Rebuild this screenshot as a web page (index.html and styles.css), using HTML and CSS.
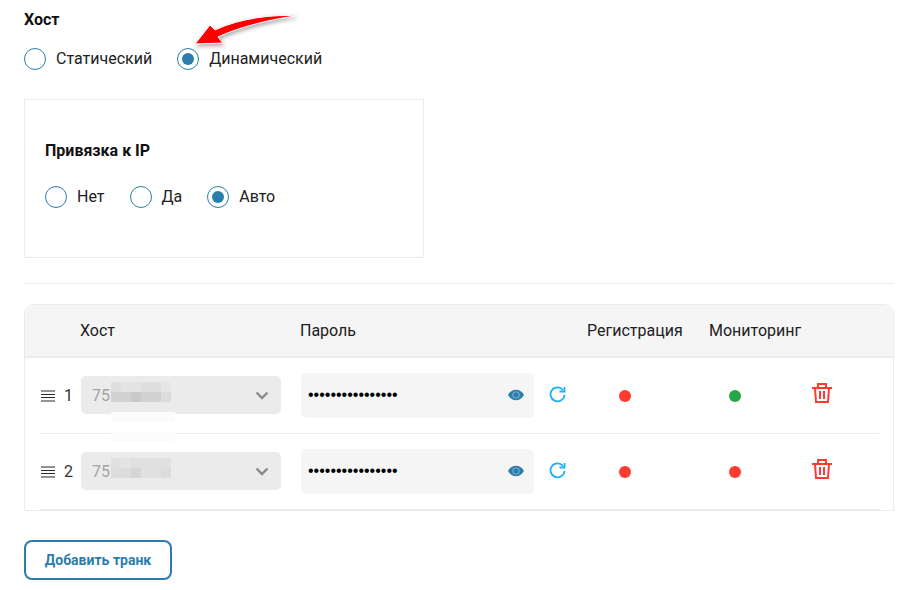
FILE: index.html
```html
<!DOCTYPE html>
<html lang="ru">
<head>
<meta charset="utf-8">
<title>Транки</title>
<link rel="stylesheet" href="styles.css">
</head>
<body>
<main class="page">
  <h2 class="title">Хост</h2>
  <div class="radios">
    <label class="radio"><span class="mark"></span>Статический</label>
    <label class="radio"><span class="mark on"></span>Динамический</label>
  </div>

  <section class="card">
    <h2 class="title">Привязка к IP</h2>
    <div class="radios">
      <label class="radio"><span class="mark"></span>Нет</label>
      <label class="radio"><span class="mark"></span>Да</label>
      <label class="radio"><span class="mark on"></span>Авто</label>
    </div>
  </section>

  <hr class="rule">

  <section class="table">
    <div class="head">
      <span class="h-host">Хост</span>
      <span class="h-pass">Пароль</span>
      <span class="h-reg">Регистрация</span>
      <span class="h-mon">Мониторинг</span>
    </div>

    <div class="row">
      <svg class="drag" width="16" height="12" viewBox="0 0 16 12"><path d="M1 1h14M1 4.500h14M1 7.500h14M1 11h14" stroke="#2a2a2a" stroke-width="1.200" fill="none"/></svg>
      <span class="num">1</span>
      <div class="select">
        <span class="sel-text">75</span>
        <svg class="mosaic" width="60" height="20" viewBox="0 0 60 20" shape-rendering="crispEdges"><rect width="60" height="10" fill="#dfdfdf"/><rect y="10" width="60" height="10" fill="#d2d2d2"/><rect x="10" width="20" height="10" fill="#e3e3e3"/><rect x="50" width="10" height="10" fill="#e6e6e6"/><rect x="20" y="10" width="10" height="10" fill="#c9c9c9"/><rect x="50" y="10" width="10" height="10" fill="#dcdcdc"/></svg>
        <svg class="chev" width="14" height="9" viewBox="0 0 14 9"><path d="M1.500 1.500 7 7l5.500-5.500" stroke="#8a8a8a" stroke-width="2.400" fill="none"/></svg>
      </div>
      <div class="pass">
        <span class="dots">••••••••••••••••</span>
        <svg class="eye" width="16" height="12" viewBox="0 0 16 12"><path d="M0 6C2 2.300 5 .8 8 .8s6 1.500 8 5.200c-2 3.700-5 5.200-8 5.200S2 9.700 0 6z" fill="#2b7dab"/><circle cx="8" cy="6" r="3.600" fill="#8dbbd5"/><circle cx="8" cy="6" r="2.700" fill="#2b7dab"/></svg>
      </div>
      <svg class="refresh" width="17" height="17" viewBox="0 0 17 17"><path d="M14 4A7 7 0 1 0 15.500 9" stroke="#1cb0f6" stroke-width="1.800" fill="none"/><path d="M15.500 1v4.500h-5" stroke="#1cb0f6" stroke-width="1.800" fill="none"/></svg>
      <span class="dot red c-reg"></span>
      <span class="dot green c-mon"></span>
      <svg class="trash" width="20" height="20" viewBox="0 0 20 20"><g stroke="#ff3b30" stroke-width="2" fill="none"><path d="M0 5h20M3 5l1 14h12l1-14M6 5V1h8v4M8 8v8M12 8v8"/></g></svg>
    </div>

    <div class="row">
      <svg class="drag" width="16" height="12" viewBox="0 0 16 12"><path d="M1 1h14M1 4.500h14M1 7.500h14M1 11h14" stroke="#2a2a2a" stroke-width="1.200" fill="none"/></svg>
      <span class="num">2</span>
      <div class="select">
        <span class="sel-text">75</span>
        <svg class="mosaic" width="60" height="20" viewBox="0 0 60 20" shape-rendering="crispEdges"><rect width="60" height="10" fill="#e0e0e0"/><rect y="10" width="60" height="10" fill="#dcdcdc"/><rect x="10" width="10" height="10" fill="#e4e4e4"/><rect x="20" y="10" width="10" height="10" fill="#d6d6d6"/><rect x="30" y="10" width="20" height="10" fill="#e0e0e0"/></svg>
        <svg class="chev" width="14" height="9" viewBox="0 0 14 9"><path d="M1.500 1.500 7 7l5.500-5.500" stroke="#8a8a8a" stroke-width="2.400" fill="none"/></svg>
      </div>
      <div class="pass">
        <span class="dots">••••••••••••••••</span>
        <svg class="eye" width="16" height="12" viewBox="0 0 16 12"><path d="M0 6C2 2.300 5 .8 8 .8s6 1.500 8 5.200c-2 3.700-5 5.200-8 5.200S2 9.700 0 6z" fill="#2b7dab"/><circle cx="8" cy="6" r="3.600" fill="#8dbbd5"/><circle cx="8" cy="6" r="2.700" fill="#2b7dab"/></svg>
      </div>
      <svg class="refresh" width="17" height="17" viewBox="0 0 17 17"><path d="M14 4A7 7 0 1 0 15.500 9" stroke="#1cb0f6" stroke-width="1.800" fill="none"/><path d="M15.500 1v4.500h-5" stroke="#1cb0f6" stroke-width="1.800" fill="none"/></svg>
      <span class="dot red c-reg"></span>
      <span class="dot red c-mon"></span>
      <svg class="trash" width="20" height="20" viewBox="0 0 20 20"><g stroke="#ff3b30" stroke-width="2" fill="none"><path d="M0 5h20M3 5l1 14h12l1-14M6 5V1h8v4M8 8v8M12 8v8"/></g></svg>
    </div>
    <div class="patch"></div>
  </section>

  <button class="add" type="button">Добавить транк</button>

  <svg class="arrow" width="112" height="40" viewBox="0 0 112 40">
    <path d="M106 6C85 4 50 8 25 20L20 15 5 34 33 33 28 27C45 19 75 10 106 6z" fill="#f00" stroke="#fff" stroke-width="1"/>
  </svg>
</main>
</body>
</html>
```

FILE: styles.css
```css
* { box-sizing: border-box; }
html, body { margin: 0; padding: 0; background: #fff; }
body { font-family: Roboto, "Liberation Sans", sans-serif; color: #212121; overflow: hidden; }

.page { position: relative; width: 903px; height: 590px; padding: 12px 9px 0 24px; }

.title { margin: 0; font-size: 16px; line-height: 16px; font-weight: 700; color: #111; }

.radios { display: flex; gap: 25px; margin-top: 20px; }
.radio { display: flex; align-items: center; gap: 10px; font-size: 16px; line-height: 22px; }
.mark { width: 22px; height: 22px; border: 1px solid #2b7dab; border-radius: 50%; background: #fff; display: block; position: relative; }
.mark.on::after { content: ""; position: absolute; left: 4px; top: 4px; width: 12px; height: 12px; border-radius: 50%; background: #2b7dab; }

.card { width: 400px; height: 159px; margin-top: 29px; padding: 43px 20px 0; border: 1px solid #ebebeb; }
.card .radios { margin-top: 27px; }

.rule { margin: 25px 0 20px; border: 0; border-top: 1px solid #ebebeb; }

.table { position: relative; height: 207px; border: 1px solid #ebebeb; border-radius: 10px 10px 0 0; }
.head { position: relative; height: 53px; background: #f5f5f5; border-bottom: 2px solid #ebebeb; border-radius: 10px 10px 0 0; font-size: 16px; line-height: 51px; }
.head span { position: absolute; top: 0; }
.h-host { left: 55px; }
.h-pass { left: 275px; }
.h-reg { left: 562px; }
.h-mon { left: 684px; }

.row { display: grid; grid-template-columns: 16px 25px 220px 248px 17px; align-items: center; position: relative; height: 76px; margin-left: 15px; margin-right: 14px; border-bottom: 1px solid #ebebeb; }
.row:last-of-type { margin-right: 0; border-bottom-width: 2px; height: 77px; }

.drag { display: block; }
.num { margin-left: 8px; font-size: 16px; color: #333; }
.select { position: relative; display: flex; align-items: center; width: 200px; height: 38px; margin-top: -2px; padding: 2px 11px 0; background: #ebebeb; border-radius: 5px; color: #a3a3a3; font-size: 16px; }
.mosaic { position: absolute; left: 30px; top: 6px; }
.chev { position: absolute; right: 12px; top: 15px; }
.pass { position: relative; display: flex; align-items: center; width: 233px; height: 45px; padding: 0 7px 2px; background: #f5f5f5; border-radius: 5px; }
.dots { font-size: 16px; color: #000; line-height: 1; font-family: "Liberation Sans", sans-serif; }
.eye { position: absolute; right: 10px; top: 16px; }
.refresh { margin-top: -2px; }
.dot { position: absolute; width: 12px; height: 12px; border-radius: 50%; top: 32px; }
.red { background: #ff3b30; }
.green { background: #28a745; }
.c-reg { left: 579px; }
.c-mon { left: 689px; }
.trash { position: absolute; left: 772px; top: 25px; }

.patch { position: absolute; left: 86px; top: 107px; width: 64px; height: 30px; background: linear-gradient(#fbfbfb 10px, #fff 10px, #fff 20px, #fcfcfc 20px); }

.add { display: block; width: 148px; height: 40px; margin-top: 29px; padding: 0; background: #fff; border: 2px solid #2b7dab; border-radius: 8px; color: #2b7dab; font: 700 14px/1 Roboto, sans-serif; }

.arrow { position: absolute; left: 190px; top: 10px; filter: drop-shadow(1px 2px 2px rgba(0,0,0,.35)); }
```
